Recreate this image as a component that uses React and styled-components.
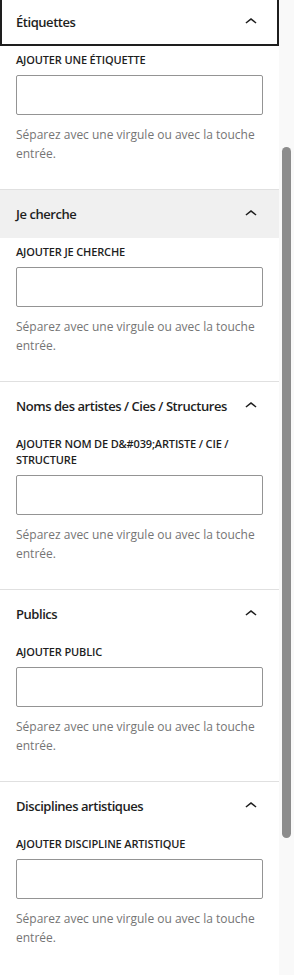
import React from 'react';
import styled, { createGlobalStyle } from 'styled-components';

//-----------Styled Component-----------//

const GlobalStyle = createGlobalStyle`
  html, body {
    margin: 0;
    padding: 0;
    background: #ffffff;
  }
  body {
    font-family: "Open Sans", "Liberation Sans", sans-serif;
    color: #1e1e1e;
    overflow: hidden;
  }
`;

const Frame = styled.div`
  display: flex;
  width: 294px;
  height: 975px;
  overflow: hidden;
`;

const Panel = styled.div`
  width: 279px;
  flex-shrink: 0;
  margin-top: -3px;
  background: #ffffff;
`;

const Section = styled.section`
  border-top: 1px solid #e0e0e0;
`;

const Header = styled.div`
  height: 48px;
  box-sizing: border-box;
  padding: 0 16px;
  display: flex;
  align-items: center;
  justify-content: space-between;
  background: ${(p) => (p.$hover ? '#f0f0f0' : 'transparent')};
  box-shadow: ${(p) => (p.$focus ? 'inset 0 0 0 2px #1e1e1e' : 'none')};
`;

const HeaderTitle = styled.span`
  font-size: 13px;
  font-weight: 600;
  color: #1e1e1e;
  letter-spacing: -0.45px;
  white-space: nowrap;
`;

const Chevron = styled.svg`
  width: 24px;
  height: 24px;
  flex-shrink: 0;
  fill: #1e1e1e;
`;

const Body = styled.div`
  padding: 6px 16px 26px;
`;

const Label = styled.div`
  font-size: 11px;
  font-weight: 600;
  line-height: 16px;
  letter-spacing: -0.15px;
  text-transform: uppercase;
  color: #1e1e1e;
  margin-bottom: 7px;
`;

const Input = styled.div`
  height: 40px;
  box-sizing: border-box;
  border: 1px solid #949494;
  border-radius: 2px;
  background: #ffffff;
`;

const Help = styled.p`
  margin: 10px 0 0;
  font-size: 12px;
  line-height: 19px;
  color: #757575;
`;

const Track = styled.div`
  width: 15px;
  flex-shrink: 0;
  background: #f9f9f9;
  display: flex;
  justify-content: center;
`;

const Thumb = styled.div`
  width: 9px;
  height: 691px;
  margin-top: 147px;
  border-radius: 5px;
  background: #8c8c8c;
`;

const HELP = 'Séparez avec une virgule ou avec la touche entrée.';

const TAXONOMIES = [
  { title: 'Étiquettes', label: 'Ajouter une étiquette', focus: true },
  { title: 'Je cherche', label: 'Ajouter Je cherche', hover: true },
  { title: 'Noms des artistes / Cies / Structures', label: 'Ajouter Nom de D&#039;artiste / Cie / Structure' },
  { title: 'Publics', label: 'Ajouter Public' },
  { title: 'Disciplines artistiques', label: 'Ajouter Discipline artistique' },
];

//--------------------------------------------//

function ChevronUp() {
  return (
    <Chevron viewBox="0 0 24 24" aria-hidden="true">
      <path d="M6.5 12.4L12 8l5.5 4.4-.9 1.2L12 10l-4.6 3.6-1-1.2z" />
    </Chevron>
  );
}

function TaxonomyPanel(props) {
  const { tax } = props;
  return (
    <Section>
      <Header $focus={tax.focus} $hover={tax.hover}>
        <HeaderTitle>{tax.title}</HeaderTitle>
        <ChevronUp />
      </Header>
      <Body>
        <Label>{tax.label}</Label>
        <Input />
        <Help>{HELP}</Help>
      </Body>
    </Section>
  );
}

const App = () => {
  return (
    <Frame>
      <GlobalStyle />
      <Panel>
        {TAXONOMIES.map((tax) => (
          <TaxonomyPanel key={tax.title} tax={tax} />
        ))}
      </Panel>
      <Track>
        <Thumb />
      </Track>
    </Frame>
  );
};

export default App;
